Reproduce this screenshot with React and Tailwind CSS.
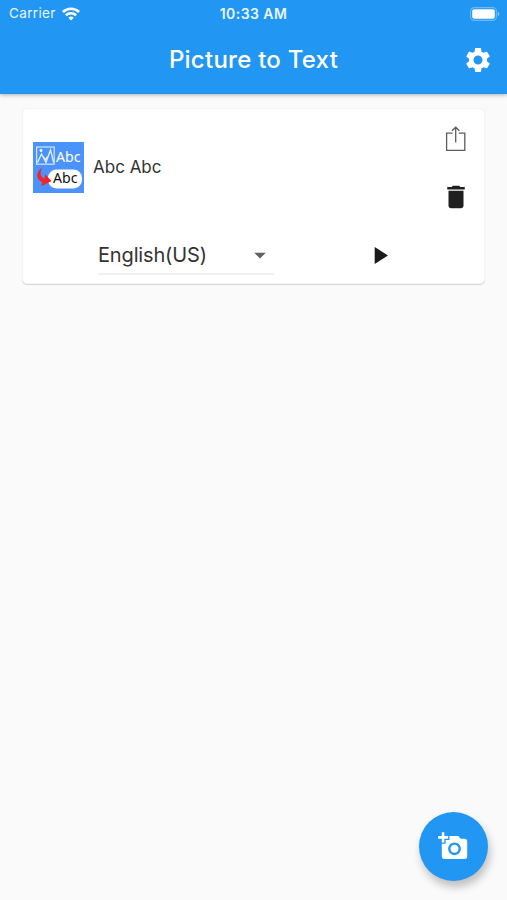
import React, { useState } from 'react'
import { MdAddAPhoto, MdArrowDropDown, MdDelete, MdPlayArrow, MdSettings } from 'react-icons/md'


function WifiIcon() {
    return (
        <svg className="ml-[6px] h-[14px] w-[18px]" viewBox="0 0 18 14" fill="none" stroke="white" strokeWidth="2.6">
            <path d="M0.9 5a11.6 11.6 0 0 1 16.2 0" />
            <path d="M3.9 8.3a7.3 7.3 0 0 1 10.2 0" />
            <path d="M9 13.5l-2.7-2.8a3.9 3.9 0 0 1 5.4 0z" fill="white" stroke="none" />
        </svg>
    )
}

function BatteryIcon() {
    return (
        <svg className="h-[14px] w-[30px]" viewBox="0 0 30 14">
            <rect x="0.6" y="0.6" width="25.8" height="12.8" rx="3.6" fill="none" stroke="white" strokeOpacity="0.35" strokeWidth="1.1" />
            <rect x="2.2" y="2.2" width="22.600" height="9.6" rx="2" fill="white" />
            <path d="M27.8 4.8c2 0.9 2 3.5 0 4.4z" fill="white" fillOpacity="0.5" />
        </svg>
    )
}

function StatusBar() {
    return (
        <div className="grid h-[27px] grid-cols-3 items-center px-[7px] text-white">
            <div className="flex items-center pl-[2px] text-[13.5px] tracking-[0.35px] text-white/90">
                Carrier
                <WifiIcon />
            </div>
            <div className="text-center text-[14px] font-semibold tracking-[0.45px] whitespace-nowrap text-white/90">10:33 AM</div>
            <div className="flex justify-end">
                <BatteryIcon />
            </div>
        </div>
    )
}

function ShareIcon() {
    return (
        <svg className="h-[26px] w-[22px]" viewBox="0 0 22 26" fill="none" stroke="#5c5c5c" strokeWidth="1.3">
            <path d="M7.6 7.2H1.6v17.2h18.2V7.2h-6" />
            <path d="M10.7 16.4V1.6M7 4.8l3.7-3.6 3.7 3.6" />
        </svg>
    )
}

// App logo shown as the thumbnail of a scanned picture
function Thumbnail() {
    return (
        <svg className="h-[51px] w-[51px]" viewBox="0 0 51 51">
            <rect width="51" height="51" fill="#4b93fa" />
            <rect x="3.6" y="5" width="17.6" height="17.2" fill="none" stroke="#d5e7ff" strokeWidth="1.2" />
            <circle cx="8" cy="8.5" r="1.4" fill="white" />
            <path d="M4.5 20.500l4-8.500 4.500 8.500 4.500-12.500 3.200 12.500M9.500 14l3 3.500 2-3" fill="none" stroke="#e6f1ff" strokeWidth="1.3" />
            <text x="23" y="19.6" fill="white" fontFamily="Noto Sans, sans-serif" fontSize="14" textLength="24.5" lengthAdjust="spacingAndGlyphs">Abc</text>
            <rect x="15" y="27.5" width="34" height="19" rx="8.5" fill="white" />
            <text x="20" y="40.8" fill="#111111" fontFamily="Noto Sans, sans-serif" fontSize="14" textLength="24.5" lengthAdjust="spacingAndGlyphs">Abc</text>
            <path d="M9.500 25.500C3 29.500 2 36.500 9.300 40.500L8.300 44.300 18.600 39 12 32.200l-.5 4.500C6.800 34.500 6.500 30 9.500 25.500z" fill="#f3232b" />
        </svg>
    )
}

function PictureCard(props) {
    return (
        <div className="mx-[22px] mt-[14px] h-[176px] rounded-[5px] border border-[#f4f4f4] bg-white pr-[17px] pl-[10px] shadow-[0_1px_1px_rgba(0,0,0,0.14)]">
            <div className="flex h-[116px] items-center">
                <Thumbnail />
                <p className="ml-[9px] flex-1 pt-[2px] text-[17px] text-[#333333]">{props.text}</p>
                <div className="flex flex-col items-center gap-[30px] pt-[4px]">
                    <button type="button" aria-label="Share">
                        <ShareIcon />
                    </button>
                    <button type="button" aria-label="Delete" className="-mx-1">
                        <MdDelete size={30} color="#1f1f1f" />
                    </button>
                </div>
            </div>
            <div className="flex items-start pt-[8px] pl-[65px]">
                <button type="button" className="flex h-[42px] w-[176px] items-center justify-between border-b-2 border-[#f0f0f0] pt-[3px] text-[20px] tracking-[-0.15px] text-[#333333]">
                    {props.language}
                    <MdArrowDropDown size={28} color="#616161" />
                </button>
                <button type="button" aria-label="Play" className="mt-[8px] ml-[91px]">
                    <MdPlayArrow size={29} color="#1a1a1a" />
                </button>
            </div>
        </div>
    )
}

function App() {
    const [pictures] = useState([{ id: 1, text: 'Abc Abc', language: 'English(US)' }])

    return (
        <div className="flex h-[900px] w-full flex-col bg-[#fafafa] font-['Inter',sans-serif]">
            <header className="h-[94px] bg-[#2196f3] shadow-[0_1px_4px_rgba(0,0,0,0.3)]">
                <StatusBar />
                <div className="grid h-[66px] grid-cols-[1fr_auto_1fr] items-center px-[14.5px]">
                    <h1 className="col-start-2 text-[24px] font-medium tracking-[0.25px] text-white">Picture to Text</h1>
                    <button type="button" aria-label="Settings" className="justify-self-end">
                        <MdSettings size={30} color="white" />
                    </button>
                </div>
            </header>

            <main className="flex-1">
                {pictures.map((picture) => (
                    <PictureCard key={picture.id} text={picture.text} language={picture.language} />
                ))}
            </main>

            {/* Floating camera button */}
            <div className="flex justify-end pr-[19px] pb-[19px]">
                <button type="button" aria-label="Add photo" className="flex h-[69px] w-[69px] items-center justify-center rounded-full bg-[#2196f3] shadow-[2px_6px_9px_rgba(0,0,0,0.24)]">
                    <MdAddAPhoto size={30.5} color="white" />
                </button>
            </div>
        </div>
    )
}

export default App
